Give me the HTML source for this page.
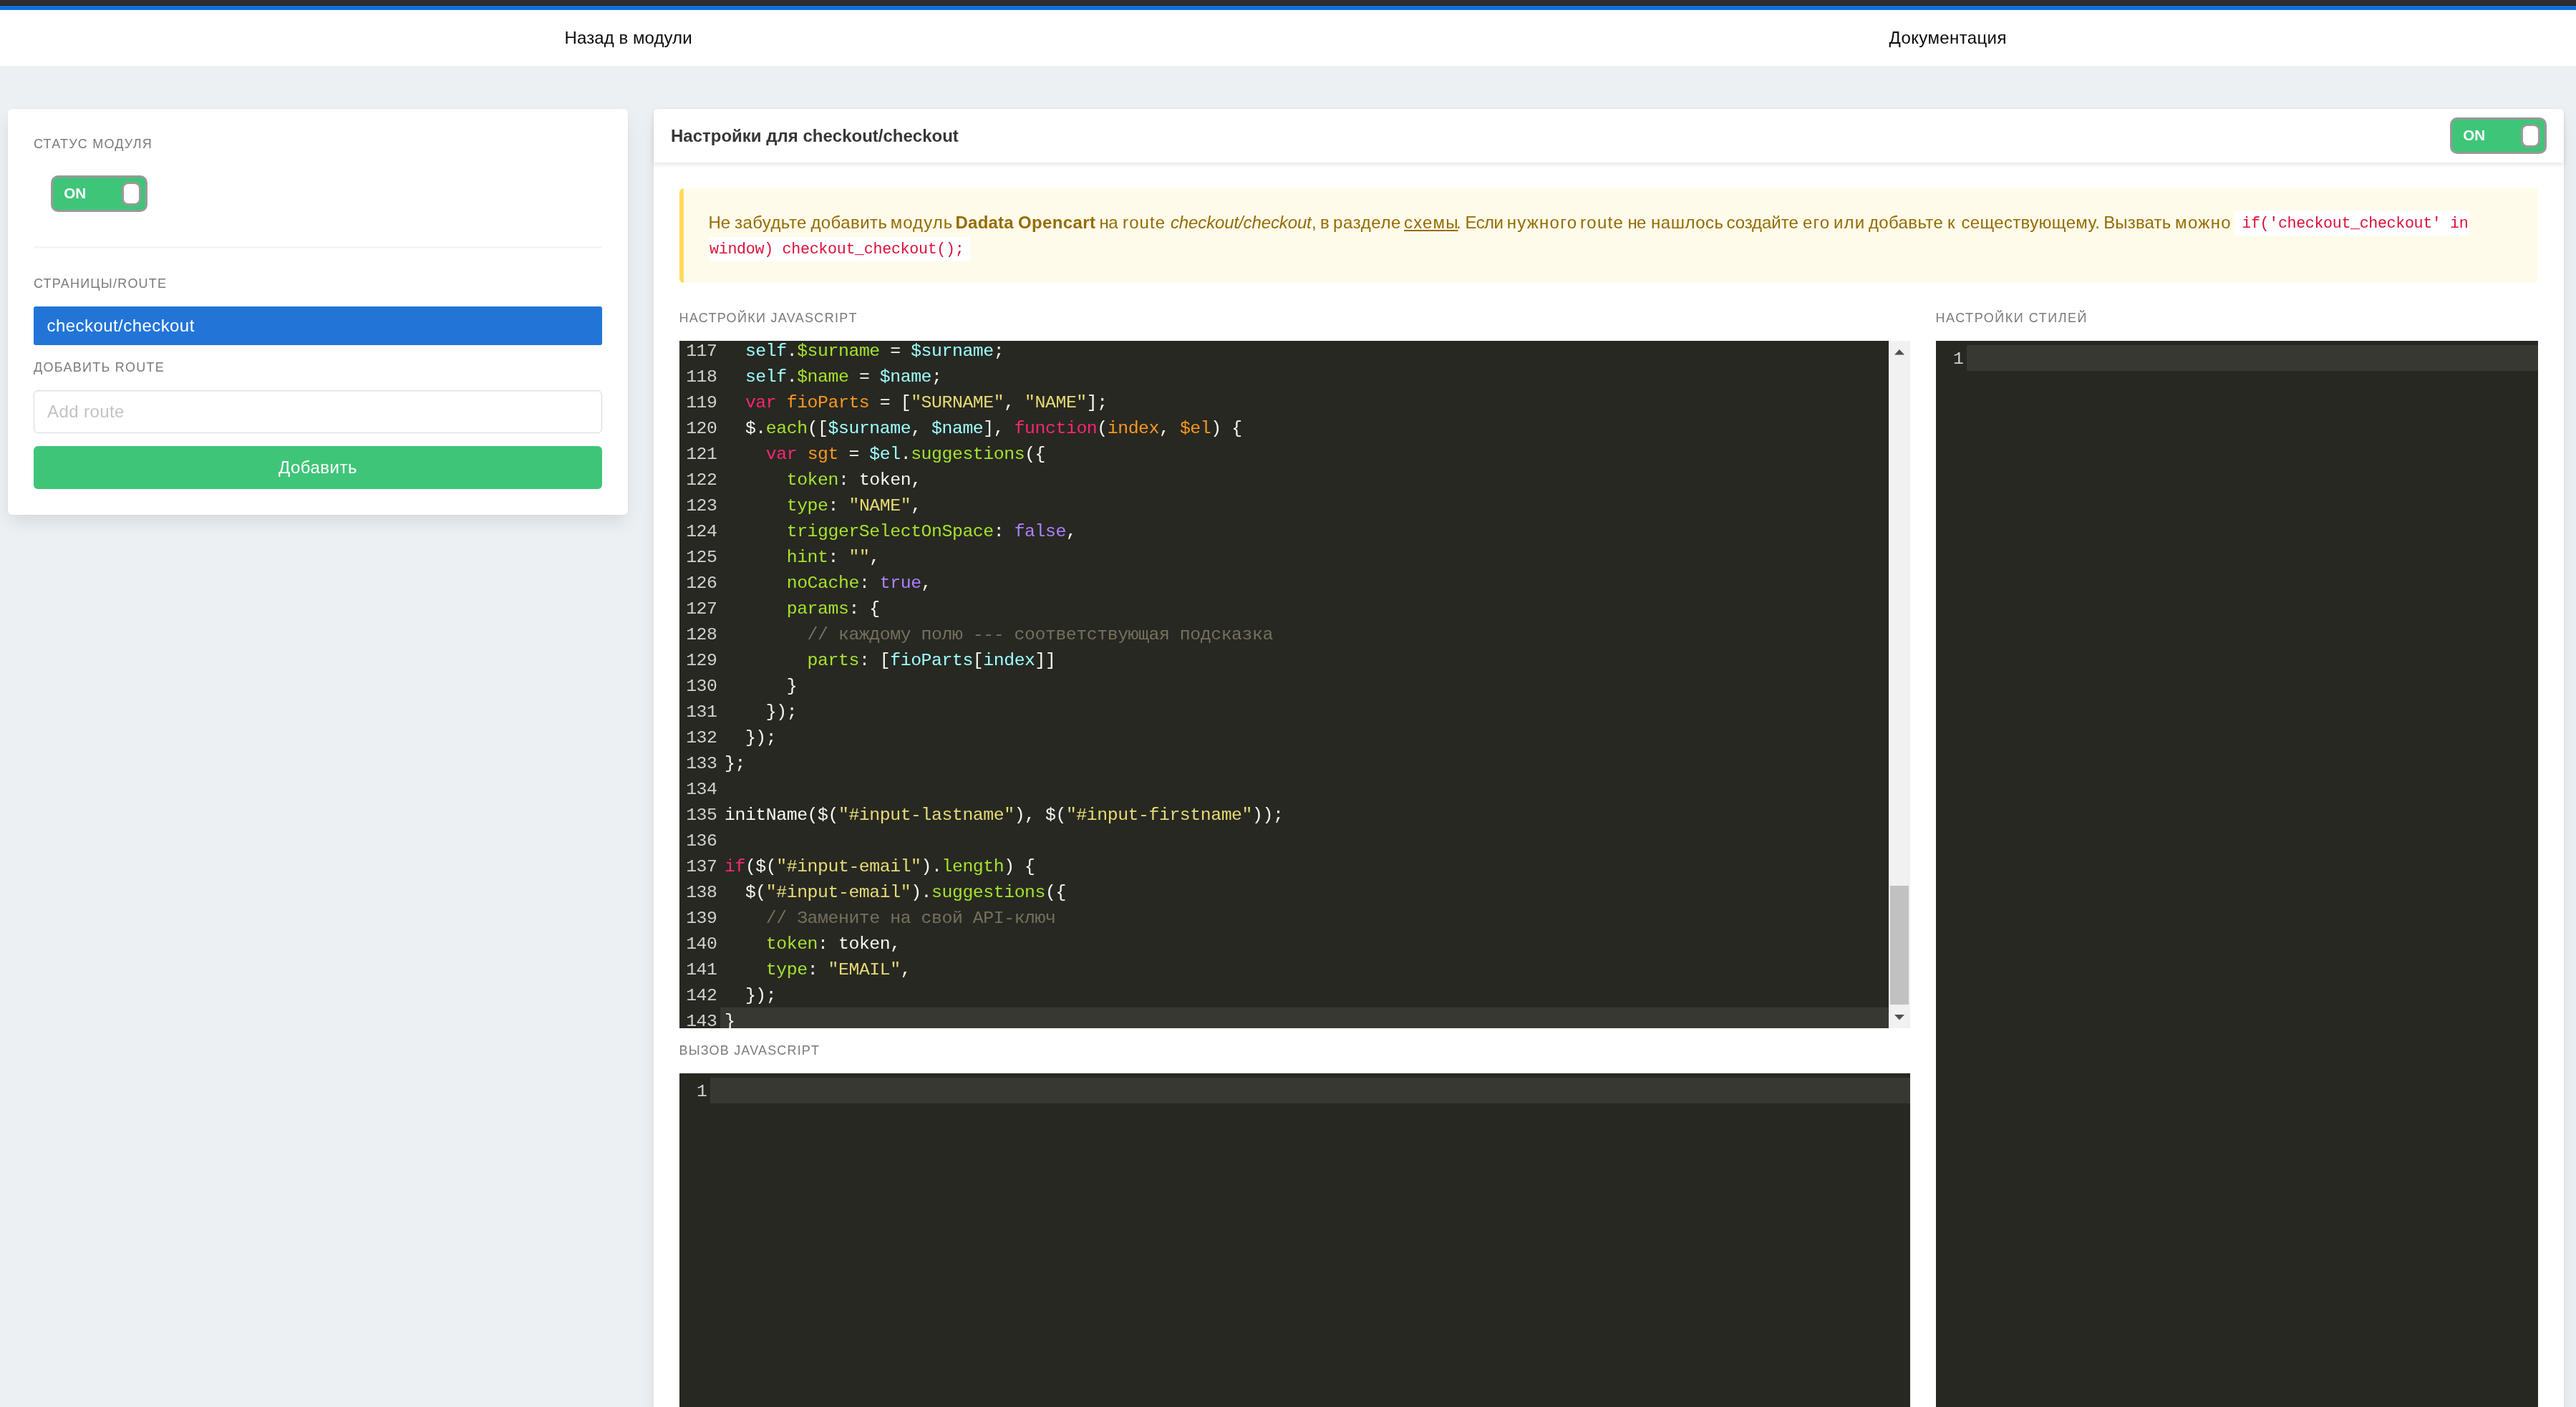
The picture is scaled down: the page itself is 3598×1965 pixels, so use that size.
<!DOCTYPE html>
<html lang="ru">
<head>
<meta charset="utf-8">
<title>Dadata Opencart</title>
<style>
*{box-sizing:border-box;margin:0;padding:0}
html,body{width:3598px;height:1965px;overflow:hidden}
body{will-change:transform;background:#ecf0f3;font-family:"Liberation Sans",sans-serif;position:relative;color:#363636}
.abs{position:absolute}
.t{position:absolute;white-space:nowrap;line-height:1}
.topdark{left:0;top:0;width:3598px;height:8px;background:#2d2d2d}
.topblue{left:0;top:8px;width:3598px;height:6px;background:#0f70d7}
.nav{left:0;top:14px;width:3598px;height:78px;background:#fff}
.navt{font-size:24px;color:#0a0a0a}
.card{background:#fff;border-radius:6px;box-shadow:0 12px 24px -3px rgba(10,10,10,.1),0 0 0 1px rgba(10,10,10,.02)}
.lbl{font-size:18px;color:#7a7a7a;text-transform:uppercase}
.tog{position:absolute;width:135px;height:51px;border:3px solid #999;border-radius:10px;background:#3fc578}
.tog .on{position:absolute;left:15.3px;top:11.8px;font-size:20.6px;font-weight:bold;color:#fff;line-height:1;white-space:nowrap}
.tog .knob{position:absolute;left:96px;top:6px;width:27px;height:33px;border:3px solid #999;border-radius:9px;background:#fff}
.ed{position:absolute;background:#272822;overflow:hidden;font-family:"Liberation Mono",monospace;font-size:24.8px;letter-spacing:-0.43px;color:#f8f8f2}
.row{position:absolute;left:0;right:0;height:36px;line-height:36px;white-space:pre}
.ln{position:absolute;top:1px;left:0;width:52.5px;text-align:right;color:#d0d0d0}
.cd{position:absolute;top:1px;left:63px;white-space:pre}
.act::before{content:"";position:absolute;left:57px;right:0;top:0;bottom:0;background:#373831}
.k{color:#f92672}.d{color:#fd971f}.v{color:#9effff}.p{color:#a6e22e}.s{color:#e6db74}.a{color:#ae81ff}.c{color:#75715e}
.msgt{font-size:24px;color:#946c00}
.code{font-family:"Liberation Mono",monospace;font-size:21.7px;color:#da1039;background:#fff}
</style>
</head>
<body>
<div class="abs topdark"></div>
<div class="abs" style="left:0;top:6.5px;width:3598px;height:1.5px;background:#1f1f1f"></div>
<div class="abs topblue"></div>
<div class="abs nav"></div>
<div class="t navt" id="t1" style="left:788.6px;top:40.7px;letter-spacing:0.07px">Назад в модули</div>
<div class="t navt" id="t2" style="left:2638.5px;top:40.7px;letter-spacing:0.38px">Документация</div>

<!-- left card -->
<div class="abs card" style="left:11px;top:152px;width:866px;height:567px"></div>
<div class="t lbl" id="t3" style="left:47px;top:191.8px;letter-spacing:1.2px">Статус модуля</div>
<div class="tog" style="left:71px;top:245px"><span class="on" id="t4">ON</span><span class="knob"></span></div>
<div class="abs" style="left:47px;top:344px;width:794px;height:3px;background:#f5f5f5"></div>
<div class="t lbl" id="t5" style="left:47px;top:387px;letter-spacing:1.2px">Страницы/route</div>
<div class="abs" style="left:47px;top:428px;width:794px;height:54px;background:#2275d7;border-radius:3px"></div>
<div class="t" id="t6" style="left:65.5px;top:442.7px;font-size:24px;color:#fff;letter-spacing:0.44px">checkout/checkout</div>
<div class="t lbl" id="t7" style="left:47px;top:504px;letter-spacing:1.27px">Добавить route</div>
<div class="abs" style="left:47px;top:545px;width:794px;height:60px;background:#fff;border:1.5px solid #dbdbdb;border-radius:6px;box-shadow:inset 0 1px 3px rgba(10,10,10,.06)"></div>
<div class="t" id="t8" style="left:66px;top:562.9px;font-size:24px;color:#c3c3c3;letter-spacing:0.42px">Add route</div>
<div class="abs" style="left:47px;top:623px;width:794px;height:60px;background:#3fc578;border-radius:6px"></div>
<div class="t" id="t9" style="left:389px;top:641.2px;font-size:24px;color:#fff;letter-spacing:0.48px">Добавить</div>

<!-- right card -->
<div class="abs card" style="left:913px;top:152px;width:2668px;height:1900px"></div>
<div class="abs" style="left:913px;top:152px;width:2668px;height:75px;background:#fff;border-radius:6px 6px 0 0;box-shadow:0 3px 6px rgba(10,10,10,.1)"></div>
<div class="t" id="t10" style="left:937px;top:177.5px;font-size:24px;font-weight:bold;color:#363636">Настройки для checkout/checkout</div>
<div class="tog" style="left:3422px;top:164px"><span class="on" id="t11">ON</span><span class="knob"></span></div>

<!-- message -->
<div class="abs" style="left:949px;top:263px;width:2596px;height:132px;background:#fffbeb;border-left:6px solid #ffdb5c;border-radius:6px"></div>
<div class="t msgt" id="w0" style="left:989.60px;top:298.8px;letter-spacing:-0.180px;">Не</div>
<div class="t msgt" id="w1" style="left:1026.02px;top:298.8px;letter-spacing:0.411px;">забудьте</div>
<div class="t msgt" id="w2" style="left:1132.40px;top:298.8px;letter-spacing:0.437px;">добавить</div>
<div class="t msgt" id="w3" style="left:1243.64px;top:298.8px;letter-spacing:1.080px;">модуль</div>
<div class="t msgt" id="w4" style="left:1334.60px;top:298.8px;letter-spacing:0.180px;font-weight:bold;">Dadata</div>
<div class="t msgt" id="w5" style="left:1422.02px;top:298.8px;letter-spacing:0.360px;font-weight:bold;">Opencart</div>
<div class="t msgt" id="w6" style="left:1535.62px;top:298.8px;letter-spacing:-0.720px;">на</div>
<div class="t msgt" id="w7" style="left:1568.08px;top:298.8px;letter-spacing:1.080px;">route</div>
<div class="t msgt" id="w8" style="left:1634.98px;top:298.8px;letter-spacing:-0.124px;font-style:italic;">checkout/checkout</div>
<div class="t msgt" id="w9" style="left:1832.10px;top:298.8px;letter-spacing:0.000px;">,</div>
<div class="t msgt" id="w10" style="left:1844.06px;top:298.8px;letter-spacing:0.000px;">в</div>
<div class="t msgt" id="w11" style="left:1862.10px;top:298.8px;letter-spacing:0.570px;">разделе</div>
<div class="t msgt" id="w12" style="left:1961.04px;top:298.8px;letter-spacing:1.170px;text-decoration:underline;">схем<span style="letter-spacing:0">ы</span></div>
<div class="t msgt" id="w13" style="left:2034.12px;top:298.8px;letter-spacing:0.000px;">.</div>
<div class="t msgt" id="w14" style="left:2046.58px;top:298.8px;letter-spacing:-0.600px;">Если</div>
<div class="t msgt" id="w15" style="left:2104.64px;top:298.8px;letter-spacing:1.290px;">нужного</div>
<div class="t msgt" id="w16" style="left:2207.06px;top:298.8px;letter-spacing:1.260px;">route</div>
<div class="t msgt" id="w17" style="left:2273.58px;top:298.8px;letter-spacing:-0.720px;">не</div>
<div class="t msgt" id="w18" style="left:2306.10px;top:298.8px;letter-spacing:0.480px;">нашлось</div>
<div class="t msgt" id="w19" style="left:2411.46px;top:298.8px;letter-spacing:-0.051px;">создайте</div>
<div class="t msgt" id="w20" style="left:2518.06px;top:298.8px;letter-spacing:1.080px;">его</div>
<div class="t msgt" id="w21" style="left:2561.10px;top:298.8px;letter-spacing:1.080px;">или</div>
<div class="t msgt" id="w22" style="left:2609.94px;top:298.8px;letter-spacing:0.360px;">добавьте</div>
<div class="t msgt" id="w23" style="left:2720.12px;top:298.8px;letter-spacing:0.000px;">к</div>
<div class="t msgt" id="w24" style="left:2739.46px;top:298.8px;letter-spacing:0.332px;">сеществующему.</div>
<div class="t msgt" id="w25" style="left:2938.14px;top:298.8px;letter-spacing:0.180px;">Вызвать</div>
<div class="t msgt" id="w26" style="left:3038.08px;top:298.8px;letter-spacing:1.350px;">можно</div>
<div class="abs" style="left:3120.5px;top:295px;width:327.5px;height:34px;background:#fff"></div>
<div class="t code" id="m8" style="left:3131.3px;top:302.1px;background:none;letter-spacing:-0.37px">if('checkout_checkout' in</div>
<div class="abs" style="left:991px;top:331px;width:364px;height:34px;background:#fff"></div>
<div class="t code" id="m9" style="left:991px;top:337.9px;background:none;letter-spacing:-0.32px">window) checkout_checkout();</div>

<div class="t lbl" id="t13" style="left:948.5px;top:435.3px;letter-spacing:1.3px">Настройки Javascript</div>
<div class="t lbl" id="t14" style="left:2703.5px;top:435.3px;letter-spacing:1.53px">Настройки стилей</div>

<!-- editor 1 -->
<div class="ed" id="ed1" style="left:949px;top:476px;width:1689px;height:960px">
<div id="rows" style="position:absolute;left:0;right:0;top:-5px">
<div class="row" style="top:0px"><span class="ln">117</span><span class="cd">  <span class="v">self</span>.<span class="p">$surname</span> = <span class="v">$surname</span>;</span></div>
<div class="row" style="top:36px"><span class="ln">118</span><span class="cd">  <span class="v">self</span>.<span class="p">$name</span> = <span class="v">$name</span>;</span></div>
<div class="row" style="top:72px"><span class="ln">119</span><span class="cd">  <span class="k">var</span> <span class="d">fioParts</span> = [<span class="s">"SURNAME"</span>, <span class="s">"NAME"</span>];</span></div>
<div class="row" style="top:108px"><span class="ln">120</span><span class="cd">  $.<span class="p">each</span>([<span class="v">$surname</span>, <span class="v">$name</span>], <span class="k">function</span>(<span class="d">index</span>, <span class="d">$el</span>) {</span></div>
<div class="row" style="top:144px"><span class="ln">121</span><span class="cd">    <span class="k">var</span> <span class="d">sgt</span> = <span class="v">$el</span>.<span class="p">suggestions</span>({</span></div>
<div class="row" style="top:180px"><span class="ln">122</span><span class="cd">      <span class="p">token</span>: token,</span></div>
<div class="row" style="top:216px"><span class="ln">123</span><span class="cd">      <span class="p">type</span>: <span class="s">"NAME"</span>,</span></div>
<div class="row" style="top:252px"><span class="ln">124</span><span class="cd">      <span class="p">triggerSelectOnSpace</span>: <span class="a">false</span>,</span></div>
<div class="row" style="top:288px"><span class="ln">125</span><span class="cd">      <span class="p">hint</span>: <span class="s">""</span>,</span></div>
<div class="row" style="top:324px"><span class="ln">126</span><span class="cd">      <span class="p">noCache</span>: <span class="a">true</span>,</span></div>
<div class="row" style="top:360px"><span class="ln">127</span><span class="cd">      <span class="p">params</span>: {</span></div>
<div class="row" style="top:396px"><span class="ln">128</span><span class="cd">        <span class="c">// каждому полю --- соответствующая подсказка</span></span></div>
<div class="row" style="top:432px"><span class="ln">129</span><span class="cd">        <span class="p">parts</span>: [<span class="v">fioParts</span>[<span class="v">index</span>]]</span></div>
<div class="row" style="top:468px"><span class="ln">130</span><span class="cd">      }</span></div>
<div class="row" style="top:504px"><span class="ln">131</span><span class="cd">    });</span></div>
<div class="row" style="top:540px"><span class="ln">132</span><span class="cd">  });</span></div>
<div class="row" style="top:576px"><span class="ln">133</span><span class="cd">};</span></div>
<div class="row" style="top:612px"><span class="ln">134</span><span class="cd"></span></div>
<div class="row" style="top:648px"><span class="ln">135</span><span class="cd">initName($(<span class="s">"#input-lastname"</span>), $(<span class="s">"#input-firstname"</span>));</span></div>
<div class="row" style="top:684px"><span class="ln">136</span><span class="cd"></span></div>
<div class="row" style="top:720px"><span class="ln">137</span><span class="cd"><span class="k">if</span>($(<span class="s">"#input-email"</span>).<span class="p">length</span>) {</span></div>
<div class="row" style="top:756px"><span class="ln">138</span><span class="cd">  $(<span class="s">"#input-email"</span>).<span class="p">suggestions</span>({</span></div>
<div class="row" style="top:792px"><span class="ln">139</span><span class="cd">    <span class="c">// Замените на свой API-ключ</span></span></div>
<div class="row" style="top:828px"><span class="ln">140</span><span class="cd">    <span class="p">token</span>: token,</span></div>
<div class="row" style="top:864px"><span class="ln">141</span><span class="cd">    <span class="p">type</span>: <span class="s">"EMAIL"</span>,</span></div>
<div class="row" style="top:900px"><span class="ln">142</span><span class="cd">  });</span></div>
<div class="row act" style="top:936px"><span class="ln">143</span><span class="cd">}</span></div>
</div>
</div>
<!-- scrollbar -->
<div class="abs" style="left:2638px;top:476px;width:30px;height:960px;background:#f1f1f1">
  <svg class="abs" style="left:0;top:0" width="30" height="960" viewBox="0 0 30 960">
    <path d="M8 19.5 L15 12 L22 19.5 Z" fill="#505050"/>
    <rect x="2" y="761" width="26" height="166" fill="#c1c1c1"/>
    <path d="M8 941 L22 941 L15 948.5 Z" fill="#505050"/>
  </svg>
</div>

<div class="t lbl" id="t15" style="left:948.5px;top:1458.4px;letter-spacing:1.17px">Вызов Javascript</div>

<!-- editor 2 -->
<div class="ed" style="left:949px;top:1499px;width:1719px;height:600px">
  <div class="abs" style="left:43px;right:0;top:6px;height:36px;background:#373831"></div>
  <div class="abs" style="left:0;top:7.1px;width:38.5px;height:36px;line-height:36px;text-align:right;color:#d0d0d0">1</div>
</div>
<!-- editor 3 -->
<div class="ed" style="left:2704px;top:476px;width:841px;height:1600px">
  <div class="abs" style="left:43px;right:0;top:6px;height:36px;background:#373831"></div>
  <div class="abs" style="left:0;top:7.1px;width:38.5px;height:36px;line-height:36px;text-align:right;color:#d0d0d0">1</div>
</div>
</body>
</html>
